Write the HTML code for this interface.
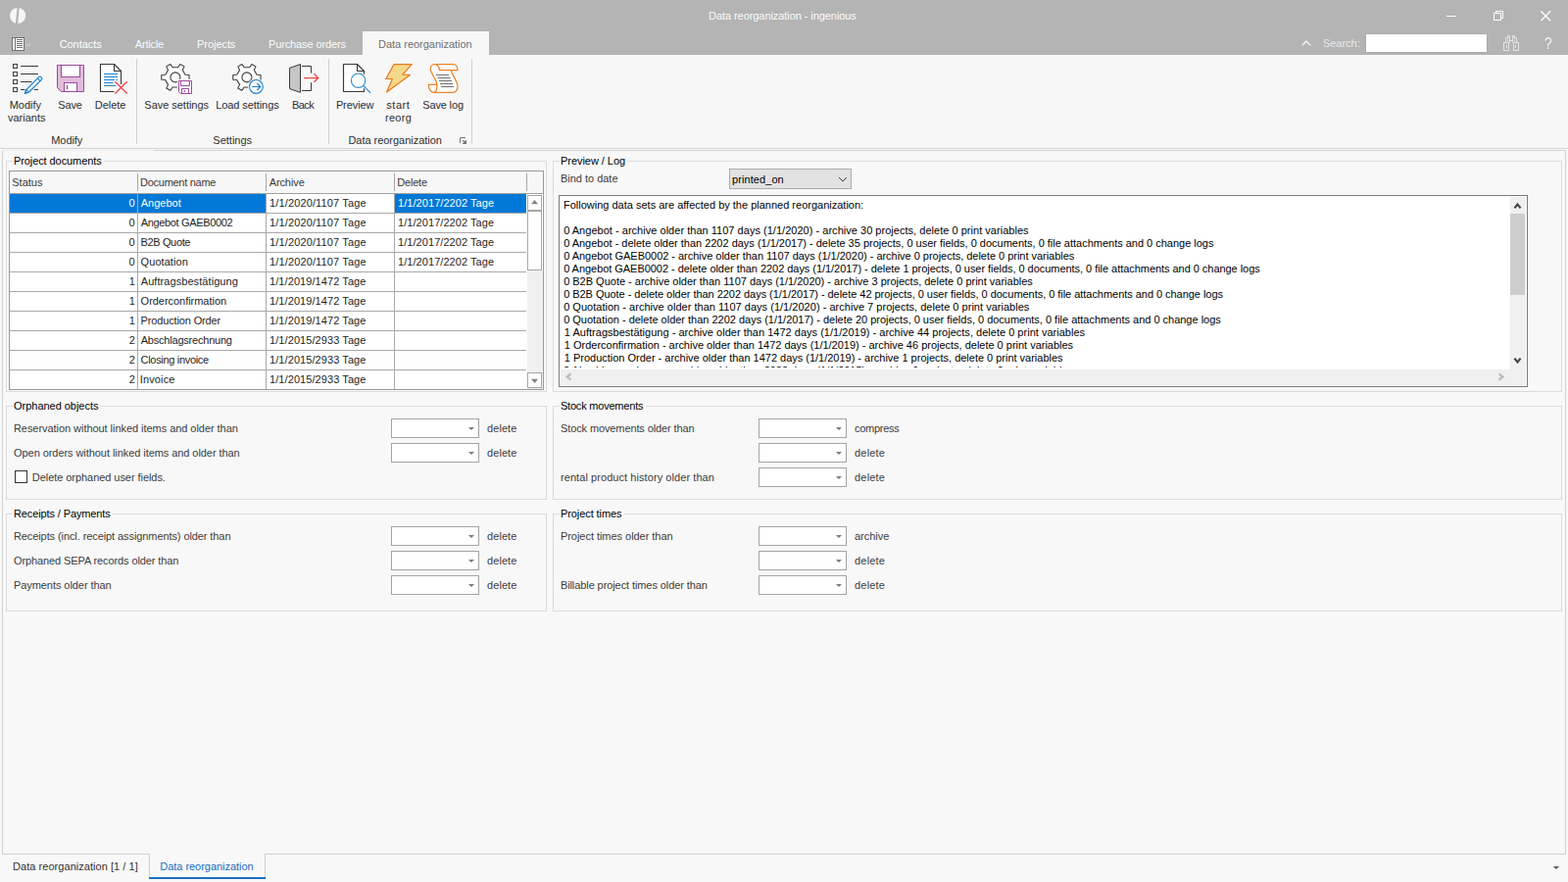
<!DOCTYPE html>
<html lang="en">
<head>
<meta charset="utf-8">
<title>Data reorganization - ingenious</title>
<style>
*{box-sizing:border-box;margin:0;padding:0}
html,body{width:1600px;height:900px;overflow:hidden;background:#f8f8f8}
body{font-family:"Liberation Sans","DejaVu Sans",sans-serif;font-size:11px;color:#2b2b2b;position:relative;line-height:13px}
div,span,svg{position:absolute}
.t{white-space:pre;line-height:13px;height:13px}
#titlebar{left:0;top:0;width:1600px;height:56px;background:#b4b4b4}
#acttab{left:370px;top:32px;width:129px;height:24px;background:#f7f7f7}
#search{left:1393px;top:34px;width:125px;height:20px;background:#fff;border:1px solid #a9a9a9;border-radius:1px}
.hl{height:1px}
.vl{width:1px}
.gb{border:1px solid #dcdcdc}
.gap{height:1px;background:#f8f8f8}
.cb{width:90px;height:20px;background:#fff;border:1px solid #a3a3a3}
.cb i{position:absolute;left:78px;top:8px;width:0;height:0;border-left:3.5px solid transparent;border-right:3.5px solid transparent;border-top:3.5px solid #7b7b7b}
#grid{left:9px;top:174px;width:546px;height:224px;border:1px solid #9a9a9a;background:#fff;overflow:hidden}
#grid div{position:absolute}
#ghead{left:0;top:0;width:544px;height:22px;background:#f7f7f7}
.sel{background:#0078d7;height:19px}
.rs{left:0;width:527px;height:1px;background:#a9a9a9}
.cs{top:23px;width:1px;height:200px;background:#a9a9a9}
.hs{top:2px;width:1px;height:18px;background:#a5a5a5}
#log{left:570px;top:199px;width:989px;height:196px;border:1px solid #7a7a7a;background:#fff;overflow:hidden}
#logtext{left:0;top:0;width:970px;height:175px;overflow:hidden}
</style>
</head>
<body>
<div id="titlebar">
  <div id="acttab"></div>
  <div id="search"></div>
  <svg width="1600" height="56" viewBox="0 0 1600 56" style="left:0;top:0">
    <!-- app logo -->
    <circle cx="18.1" cy="16" r="8.1" fill="#f6f6f6"/>
    <path d="M18.7,7.4 L17,24.6" stroke="#b4b4b4" stroke-width="2.2" fill="none"/>
    <!-- menu icon -->
    <rect x="12.5" y="38.5" width="12" height="13" fill="#fff" stroke="#707070" stroke-width="1"/>
    <path d="M15.5,39 V51" stroke="#707070" stroke-width="1" fill="none"/>
    <path d="M17,40.5 H23 M17,42.5 H23 M17,44.5 H23 M17,46.5 H23 M17,48.5 H23" stroke="#707070" stroke-width="1" fill="none"/>
    <path d="M26.6,44.4 L29.1,46.9 L31.6,44.4" stroke="#d0d0d0" stroke-width="1.1" fill="none"/>
    <!-- window buttons -->
    <path d="M1476,16.5 H1486" stroke="#fff" stroke-width="1" fill="none" shape-rendering="crispEdges"/>
    <path d="M1524.5,13.5 H1531.5 V20.5 H1524.5 Z M1526.5,13.5 V11.5 H1533.5 V18.5 H1531.5" stroke="#fff" stroke-width="1" fill="none" shape-rendering="crispEdges"/>
    <path d="M1572.3,11.3 L1582.2,21.2 M1582.2,11.3 L1572.3,21.2" stroke="#fff" stroke-width="1.25" fill="none"/>
    <!-- collapse chevron -->
    <path d="M1328.8,46.3 L1333,42 L1337.2,46.3" stroke="#f0f0f0" stroke-width="1.5" fill="none"/>
    <!-- binoculars -->
    <g stroke="#e4e4e4" stroke-width="1" fill="none">
      <rect x="1534.5" y="43.5" width="5" height="8"/>
      <rect x="1544.5" y="43.5" width="5" height="8"/>
      <path d="M1536.5,43.5 V38.5 H1540.5 V43.5 M1543.5,43.5 V38.5 H1547.5 V43.5"/>
      <path d="M1538.5,38.5 V36.5 H1540.5 V38.5 M1543.5,38.5 V36.5 H1545.5 V38.5"/>
      <path d="M1540.5,41.5 H1543.5 M1537.5,46 V49 M1546.5,46 V49 M1538.5,40 V42 M1545.5,40 V42"/>
    </g>
  </svg>
<span class="t" style="left:723.08px;top:10px;color:#fbfbfb;letter-spacing:-0.070px">Data reorganization - ingenious</span>
<span class="t" style="left:60.68px;top:39px;color:#ffffff;letter-spacing:-0.061px">Contacts</span>
<span class="t" style="left:137.84px;top:39px;color:#fbfbfb;letter-spacing:-0.217px">Article</span>
<span class="t" style="left:201.08px;top:39px;color:#fbfbfb;letter-spacing:-0.063px">Projects</span>
<span class="t" style="left:273.98px;top:39px;color:#fbfbfb;letter-spacing:-0.121px">Purchase orders</span>
<span class="t" style="left:386.08px;top:39px;color:#6f6f6f;letter-spacing:-0.025px">Data reorganization</span>
<span class="t" style="left:1349.93px;top:38px;color:#e9e9e9;letter-spacing:-0.010px">Search:</span>
<span class="t" style="left:1575.75px;top:36px;color:#f4f4f4;font-size:16px;line-height:18px;height:18px;transform:scaleX(0.85);transform-origin:0 0">?</span>
</div>

<nav>
<!-- ribbon -->
<div style="left:0;top:56px;width:1600px;height:95px;background:#f7f7f7"></div>
<div class="hl" style="left:0;top:151px;width:1600px;background:#d1d1d1"></div>
<div class="vl" style="left:139px;top:60px;height:87px;background:#d0d0d0"></div>
<div class="vl" style="left:335px;top:60px;height:87px;background:#d0d0d0"></div>
<div class="vl" style="left:481px;top:60px;height:87px;background:#d0d0d0"></div>
<svg width="500" height="100" viewBox="0 56 500 100" style="left:0;top:56px">
  <!-- Modify variants -->
  <g fill="#fff" stroke="#3b3b3b" stroke-width="1">
    <rect x="13.5" y="65.5" width="4" height="4"/>
    <rect x="13.5" y="73.5" width="4" height="4"/>
    <rect x="13.5" y="81.5" width="4" height="4"/>
    <rect x="13.5" y="89.5" width="4" height="4"/>
    <path d="M21,67.5 H39 M21,75.5 H39 M21,83.5 H32.5 M21,91.5 H25.5 M35,91.5 H39" fill="none"/>
  </g>
  <g fill="#fff" stroke="#1c82d0" stroke-width="1.25" stroke-linejoin="round">
    <path d="M25.3,95.4 L26.7,91.6 L39.9,78.4 Q40.8,77.8 41.6,78.5 L42.5,79.4 Q43.2,80.2 42.6,81.1 L29.2,94.2 Z"/>
    <path d="M27,91.4 L29.4,93.9 M38.4,80 L40.9,82.6" fill="none" stroke-width="1.1"/>
    <path d="M25.3,95.4 L26.2,92.9 L27.8,94.5 Z" fill="#1c82d0" stroke-width="0.6"/>
  </g>
  <!-- Save -->
  <path d="M58.5,66.5 H85.5 V93.5 H62.5 L58.5,89.5 Z" fill="#dfbcdb" stroke="#9c4a9e" stroke-width="1"/>
  <rect x="62.5" y="66.5" width="19" height="12" fill="#fff" stroke="#9c4a9e" stroke-width="1"/>
  <rect x="65.5" y="84.5" width="13" height="9" fill="#fff" stroke="#9c4a9e" stroke-width="1"/>
  <path d="M68.5,87 V91" stroke="#555" stroke-width="1" fill="none"/>
  <!-- Delete -->
  <path d="M102.5,65.5 H116.5 L123.5,72.5 V93.5 H102.5 Z" fill="#fff"/>
  <path d="M123.5,86 V72.5 L116.5,65.5 H102.5 V93.5 H116.5" fill="none" stroke="#3b3b3b" stroke-width="1.15" stroke-linejoin="round"/>
  <path d="M116.5,65.5 V72.5 H123.5" fill="none" stroke="#3b3b3b" stroke-width="1.15"/>
  <path d="M106,75.5 H120 M106,78.5 H120 M106,81.5 H117 M118.5,81.5 H120 M106,84.5 H115.5 M106,87.5 H118.5" stroke="#1c82d0" stroke-width="1" fill="none"/>
  <path d="M117.4,83.3 L129.7,95.6 M129.7,83.3 L117.4,95.6" stroke="#fbfbfb" stroke-width="3.4" fill="none"/>
  <path d="M117.4,83.3 L129.7,95.6 M129.7,83.3 L117.4,95.6" stroke="#e8474b" stroke-width="1.35" fill="none"/>
  <!-- Save settings -->
  <path d="M189.06,76.25 L193.00,76.52 L193.00,81.28 L189.06,81.55 L186.27,86.38 L188.02,89.92 L183.88,92.30 L181.69,89.02 L176.11,89.02 L173.92,92.30 L169.78,89.92 L171.53,86.38 L168.74,81.55 L164.80,81.28 L164.80,76.52 L168.74,76.25 L171.53,71.42 L169.78,67.88 L173.92,65.50 L176.11,68.78 L181.69,68.78 L183.88,65.50 L188.02,67.88 L186.27,71.42 Z" fill="#fff" stroke="#3b3b3b" stroke-width="1.1" stroke-linejoin="round"/>
  <circle cx="178.9" cy="78.9" r="5" fill="#fbfbfb" stroke="#3b3b3b" stroke-width="1.1"/>
  <rect x="180.8" y="80.8" width="16.4" height="16.4" fill="#f9f9f9"/>
  <path d="M182.5,82.5 H195.5 V95.5 H184.5 L182.5,93.5 Z" fill="#fff" stroke="#9c4a9e" stroke-width="1"/>
  <path d="M184.5,82.5 V87.5 H193.5 V82.5 M185.5,95.5 V90.5 H192.5 V95.5" fill="none" stroke="#9c4a9e" stroke-width="1"/>
  <path d="M188.5,92 V94" stroke="#9c4a9e" stroke-width="1" fill="none"/>
  <!-- Load settings -->
  <path d="M262.06,76.25 L266.00,76.52 L266.00,81.28 L262.06,81.55 L259.27,86.38 L261.02,89.92 L256.88,92.30 L254.69,89.02 L249.11,89.02 L246.92,92.30 L242.78,89.92 L244.53,86.38 L241.74,81.55 L237.80,81.28 L237.80,76.52 L241.74,76.25 L244.53,71.42 L242.78,67.88 L246.92,65.50 L249.11,68.78 L254.69,68.78 L256.88,65.50 L261.02,67.88 L259.27,71.42 Z" fill="#fff" stroke="#3b3b3b" stroke-width="1.1" stroke-linejoin="round"/>
  <circle cx="251.9" cy="78.9" r="5" fill="#fbfbfb" stroke="#3b3b3b" stroke-width="1.1"/>
  <circle cx="261.4" cy="88.4" r="8.5" fill="#f9f9f9"/>
  <circle cx="261.4" cy="88.4" r="6.9" fill="#fff" stroke="#1c82d0" stroke-width="1.15"/>
  <path d="M257.1,88.5 H265.6 M262.2,85 L265.8,88.5 L262.2,92" fill="none" stroke="#1c82d0" stroke-width="1.15"/>
  <!-- Back -->
  <path d="M295.5,69.4 L306.5,65.6 V94.4 L295.5,90.6 Z" fill="#c8c6c4" stroke="#3b3b3b" stroke-width="1"/>
  <path d="M308,67.5 H317.5 V74.7 M317.5,84.2 V92.5 H308" fill="none" stroke="#3b3b3b" stroke-width="1"/>
  <path d="M310,79.5 H324.6 M320.4,75.2 L324.8,79.5 L320.4,83.8" fill="none" stroke="#e8474b" stroke-width="1.25"/>
  <!-- Preview -->
  <path d="M350.5,65.5 H364.5 L371.5,72.5 V93.5 H350.5 Z" fill="#fff" stroke="#3b3b3b" stroke-width="1.15" stroke-linejoin="round"/>
  <path d="M364.5,65.5 V72.5 H371.5" fill="none" stroke="#3b3b3b" stroke-width="1.15"/>
  <circle cx="365.6" cy="82.2" r="8.8" fill="#fff"/>
  <path d="M371,87.6 L378,94.8" stroke="#f7f7f7" stroke-width="3" fill="none"/>
  <circle cx="365.6" cy="82.2" r="7.2" fill="#fff" stroke="#2a8ad4" stroke-width="1.15"/>
  <path d="M370.8,87.4 L378,94.8" stroke="#2a8ad4" stroke-width="1.2" fill="none"/>
  <!-- start reorg -->
  <path d="M402,65.6 H420.2 L410.9,76.2 L418.4,76.4 L394.6,94 L400.3,80.5 H393.8 Z" fill="#f5d98b" stroke="#e8791e" stroke-width="1.2" stroke-linejoin="round"/>
  <!-- Save log -->
  <g fill="#fff" stroke="#ea8428" stroke-width="1.25" stroke-linejoin="round">
    <path d="M443.3,65.5 H462.5 C465,65.5 466.9,68 466.9,71.5 H448.4 C448,68 446.4,65.5 443.3,65.5 C440.5,65.5 439.3,68.3 439.3,70.3 C439.3,75 445.8,81 445.8,86.3 H437.3 C437.3,91 440,94.4 442.7,94.4 H462.3 C465,94.4 467,91.5 467,88 C467,82.5 460.5,76.5 460.5,71.5"/>
    <path d="M445.8,86.3 C446.3,90 445.2,94.4 442.7,94.4" fill="none"/>
  </g>
  <path d="M445,76.5 H458 M446.5,79.5 H459.5 M448,82.5 H461 M449,85.5 H462 M450,88.5 H463" stroke="#707070" stroke-width="1" fill="none"/>
  <!-- dialog launcher -->
  <path d="M469.5,146 V140.5 H475" stroke="#777" stroke-width="1" fill="none"/>
  <path d="M476,142.4 V147 H471.4 Z" fill="#777"/>
  <path d="M472.2,143.2 L475,146" stroke="#777" stroke-width="1.2" fill="none"/>
</svg>

<span class="t" style="left:9.78px;top:101px;color:#2e2e2e;letter-spacing:-0.056px">Modify</span>
<span class="t" style="left:7.93px;top:114px;color:#2e2e2e;letter-spacing:0.006px">variants</span>
<span class="t" style="left:59.33px;top:101px;color:#2e2e2e;letter-spacing:-0.193px">Save</span>
<span class="t" style="left:96.78px;top:101px;color:#2e2e2e;letter-spacing:-0.018px">Delete</span>
<span class="t" style="left:147.33px;top:101px;color:#2e2e2e;letter-spacing:-0.030px">Save settings</span>
<span class="t" style="left:220.18px;top:101px;color:#2e2e2e;letter-spacing:-0.077px">Load settings</span>
<span class="t" style="left:297.98px;top:101px;color:#2e2e2e;letter-spacing:-0.527px">Back</span>
<span class="t" style="left:342.88px;top:101px;color:#2e2e2e;letter-spacing:-0.091px">Preview</span>
<span class="t" style="left:394.18px;top:101px;color:#2e2e2e;letter-spacing:0.585px">start</span>
<span class="t" style="left:392.93px;top:114px;color:#2e2e2e;letter-spacing:0.297px">reorg</span>
<span class="t" style="left:431.23px;top:101px;color:#2e2e2e;letter-spacing:-0.146px">Save log</span>
<span class="t" style="left:52.28px;top:137px;color:#2e2e2e;letter-spacing:-0.084px">Modify</span>
<span class="t" style="left:217.33px;top:137px;color:#2e2e2e">Settings</span>
<span class="t" style="left:355.38px;top:137px;color:#2e2e2e;letter-spacing:-0.025px">Data reorganization</span>
</nav>

<main>
<!-- main panel border -->
<div class="vl" style="left:2px;top:154px;height:718px;background:#d2d2d2"></div>
<div class="vl" style="left:1597px;top:154px;height:718px;background:#d2d2d2"></div>
<div class="hl" style="left:3px;top:153px;width:154px;background:#efefef"></div>
<div class="hl" style="left:157px;top:153px;width:1441px;background:#d2d2d2"></div>

<!-- group boxes -->
<div class="gb" style="left:6px;top:164px;width:552px;height:236px"></div>
<div class="gap" style="left:13px;top:164px;width:93px"></div>
<div class="gb" style="left:564px;top:164px;width:1030px;height:236px"></div>
<div class="gap" style="left:571px;top:164px;width:69px"></div>
<div class="gb" style="left:6px;top:414px;width:552px;height:96px"></div>
<div class="gap" style="left:13px;top:414px;width:90px"></div>
<div class="gb" style="left:564px;top:414px;width:1030px;height:96px"></div>
<div class="gap" style="left:571px;top:414px;width:88px"></div>
<div class="gb" style="left:6px;top:524px;width:552px;height:100px"></div>
<div class="gap" style="left:13px;top:524px;width:102px"></div>
<div class="gb" style="left:564px;top:524px;width:1030px;height:100px"></div>
<div class="gap" style="left:571px;top:524px;width:66px"></div>

<!-- grid -->
<div id="grid">
  <div id="ghead"></div>
  <div class="hs" style="left:130px"></div>
  <div class="hs" style="left:261px"></div>
  <div class="hs" style="left:392px"></div>
  <div class="hs" style="left:527px"></div>
  <div style="left:0;top:22px;width:544px;height:1px;background:#a0a0a0"></div>
  <div class="sel" style="left:0;top:23px;width:130px"></div>
  <div class="sel" style="left:131px;top:23px;width:130px"></div>
  <div class="sel" style="left:393px;top:23px;width:134px"></div>
  <div class="rs" style="top:42px"></div>
  <div class="rs" style="top:62px"></div>
  <div class="rs" style="top:82px"></div>
  <div class="rs" style="top:102px"></div>
  <div class="rs" style="top:122px"></div>
  <div class="rs" style="top:142px"></div>
  <div class="rs" style="top:162px"></div>
  <div class="rs" style="top:182px"></div>
  <div class="rs" style="top:202px"></div>
  <div class="cs" style="left:130px"></div>
  <div class="cs" style="left:261px"></div>
  <div class="cs" style="left:392px"></div>
  <!-- scrollbar -->
  <div style="left:528px;top:101px;width:16px;height:121px;background:#f0f0f0"></div>
  <div style="left:528px;top:24px;width:15px;height:16px;background:#fff;border:1px solid #a6a6a6"></div>
  <div style="left:528px;top:40px;width:15px;height:61px;background:#fff;border:1px solid #a6a6a6"></div>
  <div style="left:528px;top:205px;width:15px;height:16px;background:#fff;border:1px solid #a6a6a6"></div>
  <svg width="16" height="199" viewBox="0 0 16 199" style="left:528px;top:24px"><path d="M4,9.2 H11.1 L7.55,5 Z M4,187.8 H11.1 L7.55,192 Z" fill="#858585"/></svg>
</div>

<!-- bind select -->
<div style="left:744px;top:172px;width:125px;height:21px;background:#e2e2e2;border:1px solid #adadad"></div>
<svg width="10" height="7" viewBox="0 0 10 7" style="left:855px;top:180px"><path d="M1,1 L5,5 L9,1" stroke="#3c3c3c" stroke-width="1" fill="none"/></svg>

<!-- log box -->
<div id="log">
  <div id="logtext">
<span class="t" style="left:3.98px;top:3px;color:#000000">Following data sets are affected by the planned reorganization:</span>
<span class="t" style="left:4.13px;top:29px;color:#000000;letter-spacing:0.026px">0 Angebot - archive older than 1107 days (1/1/2020) - archive 30 projects, delete 0 print variables</span>
<span class="t" style="left:4.13px;top:42px;color:#000000;letter-spacing:-0.010px">0 Angebot - delete older than 2202 days (1/1/2017) - delete 35 projects, 0 user fields, 0 documents, 0 file attachments and 0 change logs</span>
<span class="t" style="left:4.13px;top:55px;color:#000000;letter-spacing:-0.025px">0 Angebot GAEB0002 - archive older than 1107 days (1/1/2020) - archive 0 projects, delete 0 print variables</span>
<span class="t" style="left:4.13px;top:68px;color:#000000;letter-spacing:-0.042px">0 Angebot GAEB0002 - delete older than 2202 days (1/1/2017) - delete 1 projects, 0 user fields, 0 documents, 0 file attachments and 0 change logs</span>
<span class="t" style="left:4.13px;top:81px;color:#000000;letter-spacing:-0.005px">0 B2B Quote - archive older than 1107 days (1/1/2020) - archive 3 projects, delete 0 print variables</span>
<span class="t" style="left:4.13px;top:94px;color:#000000;letter-spacing:-0.038px">0 B2B Quote - delete older than 2202 days (1/1/2017) - delete 42 projects, 0 user fields, 0 documents, 0 file attachments and 0 change logs</span>
<span class="t" style="left:4.13px;top:107px;color:#000000;letter-spacing:0.022px">0 Quotation - archive older than 1107 days (1/1/2020) - archive 7 projects, delete 0 print variables</span>
<span class="t" style="left:4.13px;top:120px;color:#000000;letter-spacing:-0.010px">0 Quotation - delete older than 2202 days (1/1/2017) - delete 20 projects, 0 user fields, 0 documents, 0 file attachments and 0 change logs</span>
<span class="t" style="left:4.86px;top:133px;color:#000000;letter-spacing:0.015px">1 Auftragsbestätigung - archive older than 1472 days (1/1/2019) - archive 44 projects, delete 0 print variables</span>
<span class="t" style="left:4.86px;top:146px;color:#000000;letter-spacing:-0.010px">1 Orderconfirmation - archive older than 1472 days (1/1/2019) - archive 46 projects, delete 0 print variables</span>
<span class="t" style="left:4.86px;top:159px;color:#000000;letter-spacing:-0.012px">1 Production Order - archive older than 1472 days (1/1/2019) - archive 1 projects, delete 0 print variables</span>
<span class="t" style="left:4.1px;top:172px;color:#000000;letter-spacing:-0.022px">2 Abschlagsrechnung - archive older than 2933 days (1/1/2015) - archive 0 projects, delete 0 print variables</span>
  </div>
  <div style="left:970px;top:1px;width:16px;height:192px;background:#f0f0f0"></div>
  <div style="left:1px;top:177px;width:985px;height:16px;background:#f0f0f0"></div>
  <div style="left:970px;top:18px;width:15px;height:83px;background:#cdcdcd"></div>
  <svg width="17" height="194" viewBox="0 0 17 194" style="left:970px;top:0">
    <path d="M4.4,12.4 L7.5,8.6 L10.6,12.4" stroke="#474747" stroke-width="2.2" fill="none"/>
    <path d="M4.4,165.6 L7.5,169.4 L10.6,165.6" stroke="#474747" stroke-width="2.2" fill="none"/>
  </svg>
  <svg width="987" height="17" viewBox="0 0 987 17" style="left:0;top:177px">
    <path d="M11.5,4.4 L7.7,7.5 L11.5,10.6" stroke="#bcbcbc" stroke-width="2.3" fill="none"/>
    <path d="M958.6,4.4 L962.4,7.5 L958.6,10.6" stroke="#bcbcbc" stroke-width="2.3" fill="none"/>
  </svg>
</div>

<!-- combos -->
<div class="cb" style="left:399px;top:427px"><i></i></div>
<div class="cb" style="left:399px;top:452px"><i></i></div>
<div class="cb" style="left:399px;top:537px"><i></i></div>
<div class="cb" style="left:399px;top:562px"><i></i></div>
<div class="cb" style="left:399px;top:587px"><i></i></div>
<div class="cb" style="left:774px;top:427px"><i></i></div>
<div class="cb" style="left:774px;top:452px"><i></i></div>
<div class="cb" style="left:774px;top:477px"><i></i></div>
<div class="cb" style="left:774px;top:537px"><i></i></div>
<div class="cb" style="left:774px;top:562px"><i></i></div>
<div class="cb" style="left:774px;top:587px"><i></i></div>
<!-- checkbox -->
<div style="left:15px;top:480px;width:13px;height:13px;background:#fff;border:1px solid #333"></div>

<span class="t" style="left:13.93px;top:158px;color:#000000;letter-spacing:-0.082px">Project documents</span>
<span class="t" style="left:571.98px;top:158px;color:#000000;letter-spacing:-0.043px">Preview / Log</span>
<span class="t" style="left:14.06px;top:408px;color:#000000;letter-spacing:-0.029px">Orphaned objects</span>
<span class="t" style="left:571.98px;top:408px;color:#000000;letter-spacing:-0.208px">Stock movements</span>
<span class="t" style="left:13.93px;top:518px;color:#000000;letter-spacing:-0.110px">Receipts / Payments</span>
<span class="t" style="left:571.93px;top:518px;color:#000000;letter-spacing:-0.078px">Project times</span>
<span class="t" style="left:571.98px;top:176px;color:#3c3c3c;letter-spacing:-0.017px">Bind to date</span>
<span class="t" style="left:747.03px;top:177px;color:#000;letter-spacing:0.079px">printed_on</span>
<span class="t" style="left:13.93px;top:431px;color:#3c3c3c;letter-spacing:-0.048px">Reservation without linked items and older than</span>
<span class="t" style="left:14.06px;top:456px;color:#3c3c3c;letter-spacing:-0.063px">Open orders without linked items and older than</span>
<span class="t" style="left:32.83px;top:481px;color:#3c3c3c;letter-spacing:-0.056px">Delete orphaned user fields.</span>
<span class="t" style="left:497.01px;top:431px;color:#3c3c3c;letter-spacing:0.081px">delete</span>
<span class="t" style="left:497.01px;top:456px;color:#3c3c3c;letter-spacing:0.081px">delete</span>
<span class="t" style="left:13.93px;top:541px;color:#3c3c3c;letter-spacing:-0.087px">Receipts (incl. receipt assignments) older than</span>
<span class="t" style="left:14.06px;top:566px;color:#3c3c3c;letter-spacing:-0.107px">Orphaned SEPA records older than</span>
<span class="t" style="left:13.93px;top:591px;color:#3c3c3c;letter-spacing:-0.061px">Payments older than</span>
<span class="t" style="left:497.01px;top:541px;color:#3c3c3c;letter-spacing:0.081px">delete</span>
<span class="t" style="left:497.01px;top:566px;color:#3c3c3c;letter-spacing:0.081px">delete</span>
<span class="t" style="left:497.01px;top:591px;color:#3c3c3c;letter-spacing:0.081px">delete</span>
<span class="t" style="left:571.98px;top:431px;color:#3c3c3c;letter-spacing:-0.110px">Stock movements older than</span>
<span class="t" style="left:571.98px;top:481px;color:#3c3c3c;letter-spacing:0.070px">rental product history older than</span>
<span class="t" style="left:872.01px;top:431px;color:#3c3c3c;letter-spacing:-0.283px">compress</span>
<span class="t" style="left:872.01px;top:456px;color:#3c3c3c;letter-spacing:0.203px">delete</span>
<span class="t" style="left:872.01px;top:481px;color:#3c3c3c;letter-spacing:0.203px">delete</span>
<span class="t" style="left:571.93px;top:541px;color:#3c3c3c;letter-spacing:-0.036px">Project times older than</span>
<span class="t" style="left:571.93px;top:591px;color:#3c3c3c;letter-spacing:-0.091px">Billable project times older than</span>
<span class="t" style="left:872.01px;top:541px;color:#3c3c3c;letter-spacing:-0.016px">archive</span>
<span class="t" style="left:872.01px;top:566px;color:#3c3c3c;letter-spacing:0.203px">delete</span>
<span class="t" style="left:872.01px;top:591px;color:#3c3c3c;letter-spacing:0.203px">delete</span>
<span class="t" style="left:12.23px;top:180px;color:#3a3a3a;letter-spacing:0.015px">Status</span>
<span class="t" style="left:143.08px;top:180px;color:#3a3a3a;letter-spacing:-0.283px">Document name</span>
<span class="t" style="left:274.64px;top:180px;color:#3a3a3a;letter-spacing:-0.085px">Archive</span>
<span class="t" style="left:405.28px;top:180px;color:#3a3a3a;letter-spacing:-0.197px">Delete</span>
<span class="t" style="left:131.58px;top:201px;color:#ffffff">0</span>
<span class="t" style="left:143.74px;top:201px;color:#ffffff;letter-spacing:0.014px">Angebot</span>
<span class="t" style="left:275.06px;top:201px;color:#1e1e1e;letter-spacing:0.130px">1/1/2020/1107 Tage</span>
<span class="t" style="left:406.06px;top:201px;color:#ffffff;letter-spacing:0.054px">1/1/2017/2202 Tage</span>
<span class="t" style="left:131.58px;top:221px;color:#1e1e1e">0</span>
<span class="t" style="left:143.74px;top:221px;color:#1e1e1e;letter-spacing:-0.342px">Angebot GAEB0002</span>
<span class="t" style="left:275.06px;top:221px;color:#1e1e1e;letter-spacing:0.130px">1/1/2020/1107 Tage</span>
<span class="t" style="left:406.06px;top:221px;color:#1e1e1e;letter-spacing:0.054px">1/1/2017/2202 Tage</span>
<span class="t" style="left:131.58px;top:241px;color:#1e1e1e">0</span>
<span class="t" style="left:143.48px;top:241px;color:#1e1e1e;letter-spacing:-0.350px">B2B Quote</span>
<span class="t" style="left:275.06px;top:241px;color:#1e1e1e;letter-spacing:0.130px">1/1/2020/1107 Tage</span>
<span class="t" style="left:406.06px;top:241px;color:#1e1e1e;letter-spacing:0.054px">1/1/2017/2202 Tage</span>
<span class="t" style="left:131.58px;top:261px;color:#1e1e1e">0</span>
<span class="t" style="left:143.61px;top:261px;color:#1e1e1e;letter-spacing:0.060px">Quotation</span>
<span class="t" style="left:275.06px;top:261px;color:#1e1e1e;letter-spacing:0.130px">1/1/2020/1107 Tage</span>
<span class="t" style="left:406.06px;top:261px;color:#1e1e1e;letter-spacing:0.054px">1/1/2017/2202 Tage</span>
<span class="t" style="left:131.66px;top:281px;color:#1e1e1e">1</span>
<span class="t" style="left:143.74px;top:281px;color:#1e1e1e;letter-spacing:0.069px">Auftragsbestätigung</span>
<span class="t" style="left:275.06px;top:281px;color:#1e1e1e;letter-spacing:0.077px">1/1/2019/1472 Tage</span>
<span class="t" style="left:131.66px;top:301px;color:#1e1e1e">1</span>
<span class="t" style="left:143.61px;top:301px;color:#1e1e1e;letter-spacing:-0.035px">Orderconfirmation</span>
<span class="t" style="left:275.06px;top:301px;color:#1e1e1e;letter-spacing:0.077px">1/1/2019/1472 Tage</span>
<span class="t" style="left:131.66px;top:321px;color:#1e1e1e">1</span>
<span class="t" style="left:143.48px;top:321px;color:#1e1e1e;letter-spacing:-0.133px">Production Order</span>
<span class="t" style="left:275.06px;top:321px;color:#1e1e1e;letter-spacing:0.077px">1/1/2019/1472 Tage</span>
<span class="t" style="left:131.66px;top:341px;color:#1e1e1e">2</span>
<span class="t" style="left:143.74px;top:341px;color:#1e1e1e;letter-spacing:-0.212px">Abschlagsrechnung</span>
<span class="t" style="left:275.06px;top:341px;color:#1e1e1e;letter-spacing:0.077px">1/1/2015/2933 Tage</span>
<span class="t" style="left:131.66px;top:361px;color:#1e1e1e">2</span>
<span class="t" style="left:143.58px;top:361px;color:#1e1e1e;letter-spacing:-0.314px">Closing invoice</span>
<span class="t" style="left:275.06px;top:361px;color:#1e1e1e;letter-spacing:0.077px">1/1/2015/2933 Tage</span>
<span class="t" style="left:131.66px;top:381px;color:#1e1e1e">2</span>
<span class="t" style="left:142.78px;top:381px;color:#1e1e1e;letter-spacing:0.125px">Invoice</span>
<span class="t" style="left:275.06px;top:381px;color:#1e1e1e;letter-spacing:0.077px">1/1/2015/2933 Tage</span>
</main>

<footer>
<div class="hl" style="left:2px;top:871px;width:151px;background:#d0d0d0"></div>
<div class="hl" style="left:270px;top:871px;width:1328px;background:#d0d0d0"></div>
<div class="vl" style="left:152px;top:871px;height:24px;background:#d0d0d0"></div>
<div class="vl" style="left:270px;top:871px;height:24px;background:#d0d0d0"></div>
<div class="hl" style="left:152px;top:895px;width:119px;height:2px;background:#1b6ec2"></div>
<svg width="12" height="8" viewBox="0 0 12 8" style="left:1582px;top:880px"><path d="M2.8,4 H9.2 L6,7.1 Z" fill="#5e5e5e"/></svg>
<span class="t" style="left:13.08px;top:878px;color:#333333;letter-spacing:0.043px">Data reorganization [1 / 1]</span>
<span class="t" style="left:163.28px;top:878px;color:#1b6ec2;letter-spacing:-0.033px">Data reorganization</span>
</footer>
</body>
</html>
